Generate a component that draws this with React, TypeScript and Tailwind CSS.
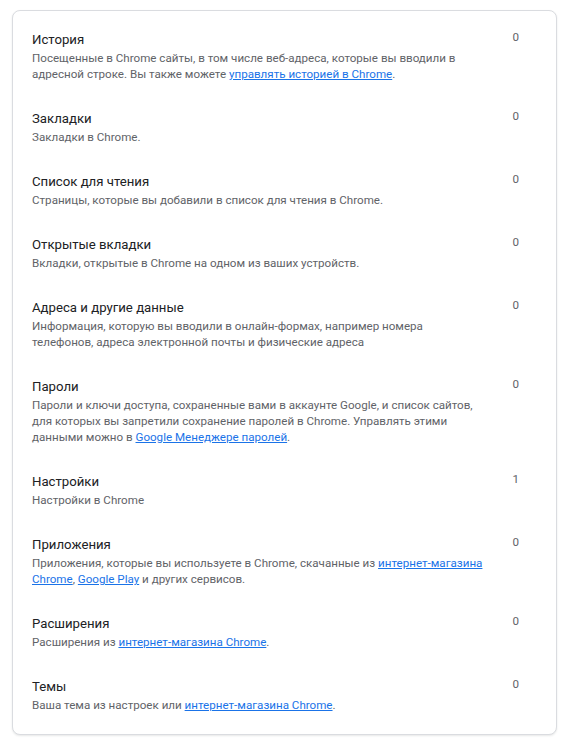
import React from "react";

const L = ({ children }: { children: React.ReactNode }) => (
  <a href="#" className="text-[#1a73e8] underline underline-offset-[1px]">
    {children}
  </a>
);

type Row = { title: string; count: string; desc: React.ReactNode };

const rows: Row[] = [
  {
    title: "История",
    count: "0",
    desc: (
      <>
        Посещенные в Chrome сайты, в том числе веб-адреса, которые вы вводили в
        <br />
        адресной строке. Вы также можете <L>управлять историей в Chrome</L>.
      </>
    ),
  },
  { title: "Закладки", count: "0", desc: <>Закладки в Chrome.</> },
  {
    title: "Список для чтения",
    count: "0",
    desc: <>Страницы, которые вы добавили в список для чтения в Chrome.</>,
  },
  {
    title: "Открытые вкладки",
    count: "0",
    desc: <>Вкладки, открытые в Chrome на одном из ваших устройств.</>,
  },
  {
    title: "Адреса и другие данные",
    count: "0",
    desc: (
      <>
        Информация, которую вы вводили в онлайн-формах, например номера
        <br />
        телефонов, адреса электронной почты и физические адреса
      </>
    ),
  },
  {
    title: "Пароли",
    count: "0",
    desc: (
      <>
        Пароли и ключи доступа, сохраненные вами в аккаунте Google, и список сайтов,
        <br />
        для которых вы запретили сохранение паролей в Chrome. Управлять этими
        <br />
        данными можно в <L>Google Менеджере паролей</L>.
      </>
    ),
  },
  { title: "Настройки", count: "1", desc: <>Настройки в Chrome</> },
  {
    title: "Приложения",
    count: "0",
    desc: (
      <>
        Приложения, которые вы используете в Chrome, скачанные из <L>интернет-магазина</L>
        <br />
        <L>Chrome</L>, <L>Google Play</L> и других сервисов.
      </>
    ),
  },
  {
    title: "Расширения",
    count: "0",
    desc: (
      <>
        Расширения из <L>интернет-магазина Chrome</L>.
      </>
    ),
  },
  {
    title: "Темы",
    count: "0",
    desc: (
      <>
        Ваша тема из настроек или <L>интернет-магазина Chrome</L>.
      </>
    ),
  },
];

export default function App() {
  return (
    <div
      className="min-h-[750px] w-[562px] bg-white pt-[10px] pl-[12px] pr-[5px]"
      style={{ fontFamily: "Roboto, 'Noto Sans', sans-serif" }}
    >
      <div className="w-[545px] rounded-[8px] border border-[#dadce0] bg-white pt-[5px] pb-[8px] pl-[19px] pr-[37px] shadow-[0_1px_2px_rgba(60,64,67,0.12)]">
        {rows.map((r) => (
          <div key={r.title} className="flex items-start pt-[14px] pb-[13px]">
            <div className="flex-1 min-w-0">
              <div className="text-[13.2px] leading-[20px] text-[#202124]">{r.title}</div>
              <div className="whitespace-nowrap text-[11.6px] leading-[16px] text-[#5f6368]">
                {r.desc}
              </div>
            </div>
            <div className="pl-4 text-[11.6px] leading-[14px] text-[#5f6368]">{r.count}</div>
          </div>
        ))}
      </div>
    </div>
  );
}
